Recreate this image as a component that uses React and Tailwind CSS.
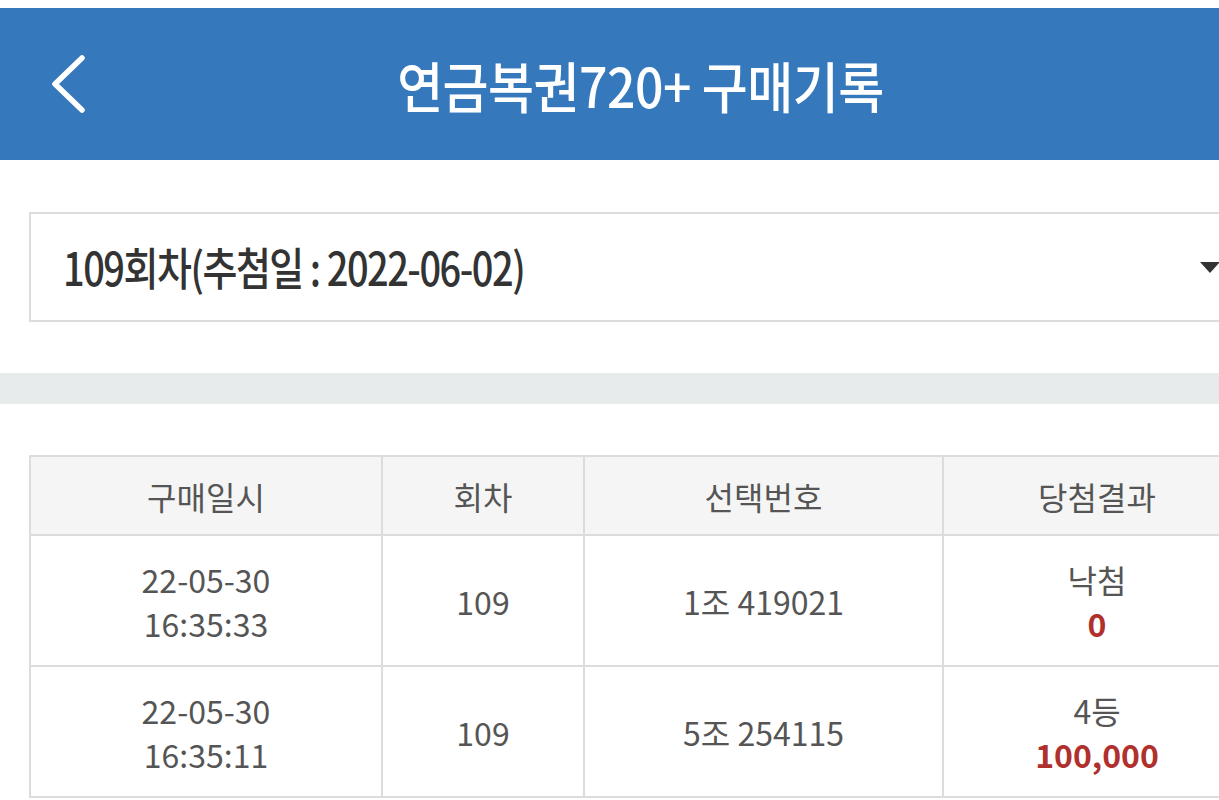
const rows = [
	{ date: "22-05-30", time: "16:35:33", round: "109", number: "1조 419021", result: "낙첨", amount: "0" },
	{ date: "22-05-30", time: "16:35:11", round: "109", number: "5조 254115", result: "4등", amount: "100,000" },
];

function BackIcon() {
	return (
		<svg width="40" height="64" viewBox="0 0 40 64" fill="none">
			<polyline
				points="33,6 6,32 33,58"
				stroke="white"
				strokeWidth="5.5"
				strokeLinecap="round"
				strokeLinejoin="round"
			/>
		</svg>
	);
}

function App() {
	return (
		<div
			className="w-[1219px] h-[800px] overflow-hidden bg-white"
			style={{ fontFamily: '"Noto Sans CJK KR", "Noto Sans", sans-serif' }}
		>
			<div className="w-[1281px]">
				<div className="h-[8px] bg-white" />
				<header className="h-[152px] bg-[#3578bc] flex items-center relative">
					<div className="pl-[49px] flex items-center">
						<BackIcon />
					</div>
					<h1 className="absolute left-0 right-0 text-center text-white text-[50px] font-medium leading-none tracking-[-0.5px]">
						<span className="inline-block scale-y-[1.1]">연금복권720+ 구매기록</span>
					</h1>
				</header>

				<div className="pt-[52px] px-[29px]">
					<div className="h-[110px] border-2 border-[#dcdcdc] flex items-center justify-between pl-[32px] pr-[30px]">
						<span className="inline-block scale-y-[1.2] text-[38px] text-[#333] font-medium tracking-[-1.5px] leading-none">
							109회차(추첨일 : 2022-06-02)
						</span>
						<span className="w-0 h-0 border-l-[10px] border-r-[10px] border-t-[11px] border-l-transparent border-r-transparent border-t-[#333]" />
					</div>
				</div>

				<div className="mt-[51px] h-[31px] bg-[#e8ebec]" />

				<div className="pt-[51px] px-[29px]">
					<table className="w-full border-collapse border-2 border-[#dcdcdc] text-[#555] text-[32px] text-center">
						<thead>
							<tr className="h-[79px] bg-[#f5f5f5]">
								<th className="w-[352px] border-2 border-[#dcdcdc] font-normal">구매일시</th>
								<th className="w-[202px] border-2 border-[#dcdcdc] font-normal">회차</th>
								<th className="w-[359px] border-2 border-[#dcdcdc] font-normal">선택번호</th>
								<th className="border-2 border-[#dcdcdc] font-normal">당첨결과</th>
							</tr>
						</thead>
						<tbody>
							{rows.map((row, i) => (
								<tr key={i} className="h-[131px]">
									<td className="border-2 border-[#dcdcdc] leading-[44px]">
										<div>{row.date}</div>
										<div>{row.time}</div>
									</td>
									<td className="border-2 border-[#dcdcdc]">{row.round}</td>
									<td className="border-2 border-[#dcdcdc]">{row.number}</td>
									<td className="border-2 border-[#dcdcdc] leading-[44px]">
										<div>{row.result}</div>
										<div className="text-[#b0302d] text-[32px] font-bold">{row.amount}</div>
									</td>
								</tr>
							))}
						</tbody>
					</table>
				</div>
			</div>
		</div>
	);
}

export default App;
